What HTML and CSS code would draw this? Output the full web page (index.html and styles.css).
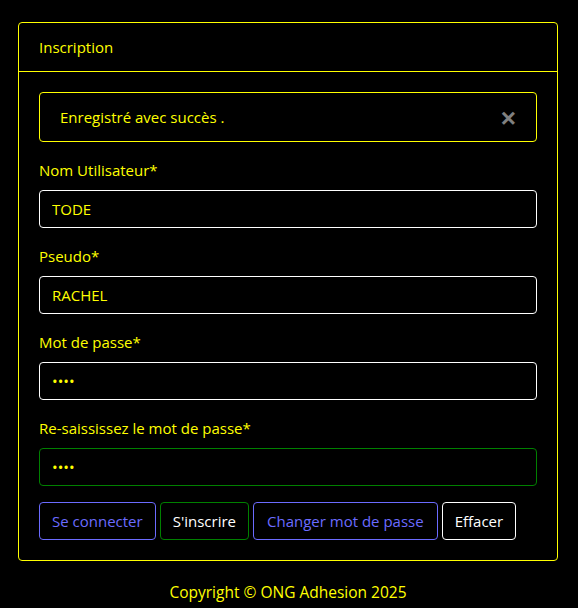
FILE: index.html
```html
<!DOCTYPE html>
<html lang="fr">
<head>
<meta charset="utf-8">
<title>Inscription</title>
<link rel="stylesheet" href="styles.css">
</head>
<body>
<div class="container">
  <div class="card">
    <div class="card-header">Inscription</div>
    <div class="card-body">
      <div class="alert">
        <span>Enregistré avec succès .</span>
        <button class="close" type="button">&times;</button>
      </div>
      <div class="form-group">
        <label>Nom Utilisateur*</label>
        <input class="form-control" type="text" value="TODE">
      </div>
      <div class="form-group">
        <label>Pseudo*</label>
        <input class="form-control" type="text" value="RACHEL">
      </div>
      <div class="form-group">
        <label>Mot de passe*</label>
        <input class="form-control" type="password" value="1234">
      </div>
      <div class="form-group">
        <label>Re-saississez le mot de passe*</label>
        <input class="form-control valid" type="password" value="1234">
      </div>
      <div class="actions">
        <button class="btn btn-blue" type="button">Se connecter</button>
        <button class="btn btn-green" type="button">S'inscrire</button>
        <button class="btn btn-blue btn-wide" type="button">Changer mot de passe</button>
        <button class="btn btn-white" type="button">Effacer</button>
      </div>
    </div>
  </div>
  <footer class="footer">Copyright © ONG Adhesion 2025</footer>
</div>
</body>
</html>
```
FILE: styles.css
```css
* { box-sizing: border-box; }
html, body { background: #000; }
body {
  margin: 0;
  padding: 22px 20px 0 18px;
  font-family: "Open Sans", "Noto Sans", sans-serif;
  font-size: 15px;
  line-height: 24px;
  color: #ffff00;
}
.card {
  border: 1px solid #ffff00;
  border-radius: 4px;
  width: 540px;
}
.card-header {
  padding: 12px 20px;
  border-bottom: 1px solid #ffff00;
}
.card-body {
  padding: 20px;
}
.alert {
  position: relative;
  border: 1px solid #ffff00;
  border-radius: 4px;
  padding: 12px 64px 12px 20px;
  margin-bottom: 16px;
}
.close {
  position: absolute;
  top: 0;
  right: 0;
  padding: 12px 20px;
  background: none;
  border: 0;
  color: #fff;
  opacity: .5;
  font-family: "Liberation Sans", sans-serif;
  font-size: 26px;
  font-weight: bold;
  line-height: 26px;
  cursor: pointer;
}
.form-group {
  display: flex;
  flex-direction: column;
  margin-bottom: 16px;
}
label {
  margin-bottom: 8px;
}
.form-control {
  height: 38px;
  padding: 6px 12px;
  background: #000;
  color: #ffff00;
  border: 1px solid #fff;
  border-radius: 4px;
  font-family: inherit;
  font-size: 15px;
  outline: none;
}
.form-control.valid { border-color: #008000; }
.actions {
  display: flex;
  gap: 4px;
}
.btn {
  height: 38px;
  padding: 6px 12px;
  background: #000;
  border: 1px solid;
  border-radius: 4px;
  font-family: inherit;
  font-size: 15px;
  line-height: 24px;
  cursor: pointer;
}
.btn-wide { padding: 6px 13px; }
.btn-blue { color: #6b6bff; border-color: #6b6bff; }
.btn-green { color: #fff; border-color: #008000; }
.btn-white { color: #fff; border-color: #fff; }
.footer {
  text-align: center;
  padding: 19px 0;
  width: 540px;
  font-size: 15.5px;
}
```
